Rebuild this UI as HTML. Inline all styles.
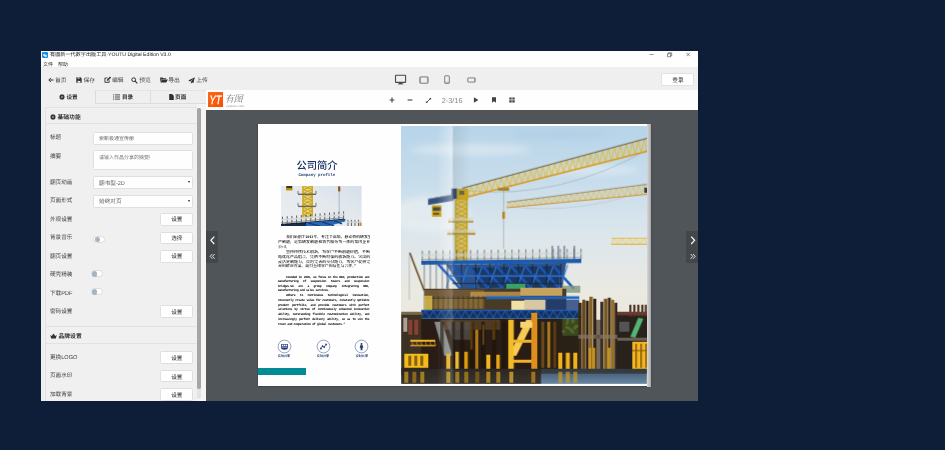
<!DOCTYPE html>
<html lang="zh-CN">
<head>
<meta charset="utf-8">
<title>有图新一代数字出版工具-YOUTU Digital Edition V3.0</title>
<style>
*{box-sizing:border-box;margin:0;padding:0}
html,body{width:945px;height:450px;overflow:hidden;background:#0e1e39}
body{text-rendering:geometricPrecision;position:relative;font-family:"Liberation Sans","Noto Sans CJK SC",sans-serif;color:#333}
.abs{position:absolute}
#win{filter:blur(0.3px);opacity:0.999;will-change:transform;position:absolute;left:41px;top:51px;width:657px;height:350px;background:#f0f0f0;overflow:hidden}
/* coordinates inside #win are page coords minus (41,51) */
#titlebar{position:absolute;left:0;top:0;width:657px;height:16px;background:#fff}
.t{position:absolute;white-space:nowrap;line-height:1}
#toolbar{position:absolute;left:0;top:16px;width:657px;height:23px;background:#f0f0f0}
.tb{position:absolute;top:27px;font-size:5.8px;color:#4a4a4a;white-space:nowrap;line-height:7px;height:7px}
#tabs{position:absolute;left:0;top:39px;width:165px;height:14px;z-index:2}
.tab{position:absolute;top:0;height:14px;font-size:5.6px;font-weight:bold;line-height:17.4px;text-align:center;color:#333;border-bottom:1px solid #ddd}
#side{position:absolute;left:0;top:0;width:165px;height:350px}
.car{position:absolute;right:2.6px;top:4.3px;width:0;height:0;border-left:1.7px solid transparent;border-right:1.7px solid transparent;border-top:2.4px solid #222}
.panel{position:absolute;left:4px;width:153px;border:1px solid #e2e2e2;background:#f1f1f1}
.ph{position:absolute;left:0;width:151px;height:16px;border-bottom:1px solid #e2e2e2;font-size:6px;font-weight:bold;color:#333;line-height:16px;padding-left:6px}
.lb{margin-top:1.5px;position:absolute;left:9px;font-size:5.6px;color:#444;line-height:7px;white-space:nowrap}
.inp{position:absolute;left:52.1px;width:100.3px;background:#fff;border:1px solid #e0e0e0;overflow:hidden;border-radius:1.5px;font-size:5px;color:#666;padding-left:5px;white-space:nowrap}
.btn{position:absolute;left:119.2px;width:33.2px;height:12.5px;overflow:hidden;background:#fff;border:1px solid #e0e0e0;border-radius:1.5px;font-size:5.6px;color:#333;text-align:center;line-height:11.5px}
.tog{position:absolute;width:11.8px;height:6.9px;border-radius:3.5px;background:#fff;border:0.5px solid #d8dde2}
.tog:before{content:"";position:absolute;left:0.5px;top:0.4px;width:5.2px;height:5.2px;border-radius:50%;background:#a9b4c0}
.cn{position:absolute;white-space:nowrap;font-family:"Liberation Serif","Noto Serif CJK SC",serif;font-weight:600;font-size:15.6px;line-height:18.4px;height:18.4px;color:#000;transform:scale(0.25);transform-origin:0 0;overflow:hidden}
.en{position:absolute;white-space:nowrap;font-family:"Liberation Mono",monospace;font-size:12.4px;font-weight:bold;letter-spacing:-1.2px;line-height:17.6px;height:17.6px;color:#000;transform:scale(0.25);transform-origin:0 0;overflow:hidden}
#viewer{position:absolute;left:164.6px;top:39.4px;width:493px;height:311px;background:#51565a}
#vbar{position:absolute;left:0;top:0;width:493px;height:19.2px;background:#fff}
</style>
</head>
<body>
<div id="win">
  <div id="titlebar">
    <svg class="abs" style="left:0.5px;top:0.5px" width="6" height="6" viewBox="0 0 6 6"><rect x="0" y="0" width="6" height="6" rx="1" fill="#1e8fe0"/><path d="M1.2 2.2h2.2v1.6H1.2z M2.6 3.2h2.2v1.6H2.6z" fill="#fff"/></svg>
    <div class="t" style="left:9px;top:2.2px;font-size:5.13px;color:#222">有图新一代数字出版工具-YOUTU Digital Edition V3.0</div>
    <div class="t" style="left:2px;top:11.5px;font-size:5px;color:#333">文件</div>
    <div class="t" style="left:17px;top:11.5px;font-size:5px;color:#333">帮助</div>
    <svg class="abs" style="left:606px;top:-0.5px" width="46" height="8" viewBox="0 0 46 8"><path d="M2.5 3.5h4" stroke="#555" stroke-width="0.6" fill="none"/><path d="M20.5 2.7h3.2v3h-3.2z M21.5 2.7v-0.9h3.2v3h-1" stroke="#444" stroke-width="0.6" fill="none"/><path d="M39.5 1.8l3.4 3.4M42.9 1.8l-3.4 3.4" stroke="#444" stroke-width="0.6" fill="none"/></svg>
  </div>
  <div id="toolbar"></div>
  <!-- toolbar items (coords relative to #win) -->
  <svg class="abs" style="left:7px;top:26px" width="6" height="6" viewBox="0 0 6 6"><path d="M5.6 3H1.2M2.9 0.9L0.8 3l2.1 2.1" stroke="#333" stroke-width="1" fill="none"/></svg>
  <div class="tb" style="left:14px">首页</div>
  <svg class="abs" style="left:35px;top:26px" width="6" height="6" viewBox="0 0 6 6"><path d="M0.3 0.3h4.3l1.1 1.1v4.3H0.3z" fill="#333"/><rect x="1.5" y="0.3" width="2.3" height="1.3" fill="#f0f0f0"/><rect x="2.8" y="0.4" width="0.7" height="1" fill="#333"/><rect x="1.6" y="3.9" width="2.8" height="1.8" fill="#f0f0f0"/></svg>
  <div class="tb" style="left:42.5px">保存</div>
  <svg class="abs" style="left:62.5px;top:25px" width="7.5" height="7.5" viewBox="0 0 7.5 7.5"><path d="M5.2 4.4v1.9H0.9V2h2.6" stroke="#333" stroke-width="0.9" fill="none"/><path d="M2.8 5l0.3-1.5L6 0.6l1.1 1.1L4.2 4.6z" fill="#333"/></svg>
  <div class="tb" style="left:71px">编辑</div>
  <svg class="abs" style="left:90.4px;top:25.5px" width="7" height="7" viewBox="0 0 7 7"><circle cx="2.7" cy="2.7" r="1.9" stroke="#333" stroke-width="1" fill="none"/><path d="M4.1 4.1L6.3 6.3" stroke="#333" stroke-width="1.1"/></svg>
  <div class="tb" style="left:98.2px">预览</div>
  <svg class="abs" style="left:118.5px;top:26px" width="8" height="6" viewBox="0 0 8 6"><path d="M0.2 0.6h2.4l0.6 0.7h2.9v0.9H1.6L0.2 5z" fill="#333"/><path d="M1.9 2.6h5.9L6.3 5.6H0.4z" fill="#333"/></svg>
  <div class="tb" style="left:127.3px">导出</div>
  <svg class="abs" style="left:147.2px;top:25.5px" width="7" height="7" viewBox="0 0 7 7"><path d="M6.8 0.2L0.2 3.6l1.9 0.8L5.6 1.4L2.9 4.8v1.9l1-1.3l1.5 0.7z" fill="#333"/></svg>
  <div class="tb" style="left:155.2px">上传</div>
  <!-- device icons -->
  <svg class="abs" style="left:353px;top:23px" width="13" height="11" viewBox="0 0 13 11"><rect x="1.5" y="1.2" width="10.1" height="7.2" rx="0.5" stroke="#4a4a4a" stroke-width="1.1" fill="none"/><path d="M5.2 8.6h2.8l0.5 1.3H4.7z" fill="#4a4a4a"/><rect x="3.9" y="9.7" width="5.4" height="0.7" fill="#4a4a4a"/></svg>
  <svg class="abs" style="left:377.6px;top:24.6px" width="10" height="8" viewBox="0 0 10 8"><rect x="0.8" y="0.9" width="8.3" height="6.3" rx="0.7" stroke="#555" stroke-width="0.75" fill="none"/><path d="M1.5 1v6M8.4 1v6" stroke="#5a5a5a" stroke-width="0.35"/></svg>
  <svg class="abs" style="left:403.4px;top:24.2px" width="6" height="9" viewBox="0 0 6 9"><rect x="0.7" y="0.8" width="4.6" height="7.6" rx="0.6" stroke="#555" stroke-width="0.7" fill="none"/><path d="M0.8 7.3h4.4" stroke="#5a5a5a" stroke-width="0.4"/></svg>
  <svg class="abs" style="left:425.6px;top:25.7px" width="9" height="6" viewBox="0 0 9 6"><rect x="0.8" y="0.9" width="7.4" height="4.2" rx="0.5" stroke="#555" stroke-width="0.7" fill="none"/><path d="M7.5 1v4" stroke="#5a5a5a" stroke-width="0.35"/></svg>
  <div class="abs" style="left:620.4px;top:22.2px;width:33px;height:13px;background:#fff;border:1px solid #e2e2e2;border-radius:2px;font-size:5.6px;line-height:14.6px;text-align:center;color:#222">登录</div>
  <div id="tabs">
    <div class="tab" style="left:0;width:54.5px;border-bottom:none"><svg width="6" height="6" viewBox="-3 -3 6 6" style="vertical-align:-0.7px;margin-right:1.5px"><circle r="2.1" fill="#333"/><g stroke="#333" stroke-width="1.05"><path d="M0 -2.9V2.9M-2.9 0H2.9M-2.05 -2.05L2.05 2.05M-2.05 2.05L2.05 -2.05"/></g><circle r="0.75" fill="#f0f0f0"/></svg>设置</div>
    <div class="tab" style="left:54px;width:55.5px;border-left:1px solid #ddd;border-top:1px solid #e6e6e6;line-height:15.4px;border-bottom-left-radius:1.5px"><svg width="7" height="6" viewBox="0 0 7 6" style="vertical-align:-0.7px;margin-right:1.5px"><path d="M0 0.9h1.2M0 3h1.2M0 5.1h1.2M2 0.9h5M2 3h5M2 5.1h5" stroke="#333" stroke-width="0.85"/></svg>目录</div>
    <div class="tab" style="left:109px;width:56px;padding-right:1.6px;border-left:1px solid #ddd;border-top:1px solid #e6e6e6;line-height:15.4px;border-bottom-left-radius:1.5px"><svg width="5" height="6" viewBox="0 0 5 6" style="vertical-align:-0.7px;margin-right:1px"><path d="M0.2 0h2.8l1.8 1.8v4.2H0.2z" fill="#333"/></svg>页面</div>
  </div>
  <div id="side">
  <div class="abs" style="left:4px;top:56px;width:152.5px;height:300px;border:1px solid #e3e3e3;border-bottom:none;background:#f1f1f1"></div>
  <div class="abs" style="left:5px;top:72px;width:151px;height:1px;background:#e3e3e3"></div>
  <div class="abs" style="left:5px;top:275px;width:151px;height:1px;background:#e3e3e3"></div>
  <div class="abs" style="left:5px;top:292px;width:151px;height:1px;background:#e3e3e3"></div>
  <div class="lb" style="left:9px;top:61.1px;font-weight:bold;font-size:5.8px;color:#333"><svg width="6" height="6" viewBox="-3 -3 6 6" style="vertical-align:-0.7px;margin-right:1.5px"><circle r="2.1" fill="#333"/><g stroke="#333" stroke-width="1.05"><path d="M0 -2.9V2.9M-2.9 0H2.9M-2.05 -2.05L2.05 2.05M-2.05 2.05L2.05 -2.05"/></g><circle r="0.75" fill="#f0f0f0"/></svg>基础功能</div>
  <div class="lb" style="left:9px;top:280.1px;font-weight:bold;font-size:5.8px;color:#333"><svg width="7" height="6" viewBox="0 0 7 6" style="vertical-align:-0.7px;margin-right:1.5px"><path d="M0.2 2.1l1.6 1l1.7-2.6l1.7 2.6l1.6-1l-0.9 3H1.1z M1 5.4h5v0.6H1z" fill="#333"/></svg>品牌设置</div>
  <div class="lb" style="top:82.8px">标题</div>
  <div class="lb" style="top:101.0px">摘要</div>
  <div class="lb" style="top:127.3px">翻页动画</div>
  <div class="lb" style="top:145.8px">页面形式</div>
  <div class="lb" style="top:164.4px">外观设置</div>
  <div class="lb" style="top:182.8px">背景音乐</div>
  <div class="lb" style="top:201.3px">翻页设置</div>
  <div class="lb" style="top:219.5px">硬壳精装</div>
  <div class="lb" style="top:238.0px">下载PDF</div>
  <div class="lb" style="top:256.5px">密码设置</div>
  <div class="lb" style="top:302.5px">更换LOGO</div>
  <div class="lb" style="top:320.8px">页面水印</div>
  <div class="lb" style="top:339.4px">加载背景</div>
  <div class="inp" style="top:80.5px;height:13.0px;line-height:13.4px">索新极通宣传册</div>
  <div class="inp" style="top:98.9px;height:20.6px;line-height:15.2px;color:#777">请输入作品分享的摘要!</div>
  <div class="inp" style="top:124.8px;height:13.6px;line-height:15.0px;font-size:5.6px;color:#666">翻书型-2D<span class="car"></span></div>
  <div class="inp" style="top:143.5px;height:13.0px;line-height:13.2px;font-size:5.6px;color:#666">始终对页<span class="car"></span></div>
  <div class="btn" style="top:162.1px;height:12.6px;line-height:13.8px">设置</div>
  <div class="btn" style="top:180.6px;height:12.7px;line-height:13.9px">选择</div>
  <div class="btn" style="top:199.2px;height:12.6px;line-height:13.8px">设置</div>
  <div class="btn" style="top:254.4px;height:13.0px;line-height:14.2px">设置</div>
  <div class="btn" style="top:300.2px;height:12.8px;line-height:14.0px">设置</div>
  <div class="btn" style="top:318.5px;height:12.8px;line-height:14.0px">设置</div>
  <div class="btn" style="top:337.1px;height:12.8px;line-height:14.0px">设置</div>
  <div class="tog" style="left:52.2px;top:184.7px"></div>
  <div class="tog" style="left:49.8px;top:219.0px"></div>
  <div class="tog" style="left:49.8px;top:237.0px"></div>
  <div class="abs" style="left:155.7px;top:52px;width:9px;height:300px;background:#f6f6f6"></div>
  <div class="abs" style="left:156.4px;top:56.6px;width:3.4px;height:291.1px;background:#e4e4e4;border-radius:1.7px"></div>
  <div class="abs" style="left:156.4px;top:56.6px;width:3.4px;height:281.8px;background:#a6a6a6;border-radius:1.7px"></div>
  </div>
  <div id="viewer"><div id="vbar"></div></div>
  <div class="abs" style="left:167px;top:40.8px;width:15.2px;height:15.5px;background:linear-gradient(135deg,#ff6a14,#f94f06)"></div>
  <svg class="abs" style="left:167px;top:40.8px" width="15.2" height="15.5" viewBox="0 0 15.2 15.5"><text x="1.6" y="12.2" font-family="Liberation Sans,sans-serif" font-size="12" font-style="italic" fill="#fff" stroke="#fff" stroke-width="0.35" textLength="11.6" lengthAdjust="spacingAndGlyphs">YT</text></svg>
  <div class="t" style="left:183.8px;top:44.3px;font-family:'Liberation Serif','Noto Serif CJK SC',serif;font-style:italic;font-size:9.2px;color:#777;letter-spacing:-0.4px">有图</div>
  <div class="t" style="left:185px;top:53.8px;font-size:2.9px;color:#8c8c8c;letter-spacing:0.22px">yoututu.com</div>
  <svg class="abs" style="left:348.1px;top:46.4px" width="6" height="6" viewBox="0 0 6 6"><path d="M3 0.6v4.8M0.6 3h4.8" stroke="#444" stroke-width="1.1"/></svg>
  <svg class="abs" style="left:366.4px;top:46.4px" width="6" height="6" viewBox="0 0 6 6"><path d="M0.6 3h4.8" stroke="#444" stroke-width="1.1"/></svg>
  <svg class="abs" style="left:383.7px;top:45.9px" width="7" height="7" viewBox="0 0 7 7"><path d="M1.6 5.4L5.4 1.6" stroke="#444" stroke-width="0.9"/><path d="M4 0.9h2.1v2.1z M0.9 4v2.1h2.1z" fill="#444"/></svg>
  <div class="t" style="left:400.8px;top:45.8px;font-size:7.3px;color:#8a8a8a">2-3/16</div>
  <svg class="abs" style="left:431.5px;top:46.4px" width="6" height="6" viewBox="0 0 6 6"><path d="M0.9 0.3L5.4 3L0.9 5.7z" fill="#444"/></svg>
  <svg class="abs" style="left:449.8px;top:46.4px" width="6" height="6" viewBox="0 0 6 6"><path d="M1 0.3h4v5.4L3 4.2L1 5.7z" fill="#444"/></svg>
  <svg class="abs" style="left:467.6px;top:46.4px" width="6" height="6" viewBox="0 0 6 6"><path d="M0.3 0.5h2.4v2.1H0.3zM3.3 0.5h2.4v2.1H3.3zM0.3 3.3h2.4v2.1H0.3zM3.3 3.3h2.4v2.1H3.3z" fill="#444"/></svg>
  <div class="abs" style="left:165.1px;top:180.4px;width:11.7px;height:31.7px;background:#44484b"></div>
  <div class="abs" style="left:645.1px;top:180.4px;width:12px;height:31.7px;background:#44484b"></div>
  <svg class="abs" style="left:165.1px;top:180.4px" width="11.7" height="31.7" viewBox="0 0 11.7 31.7"><path d="M8.3 5.6L4.9 9.3L8.3 13" stroke="#fff" stroke-width="1.2" fill="none"/><path d="M6.3 23L4.1 25.4L6.3 27.8M8.7 23L6.5 25.4L8.7 27.8" stroke="#eee" stroke-width="0.9" fill="none"/></svg>
  <svg class="abs" style="left:645.1px;top:180.4px" width="11.9" height="31.7" viewBox="0 0 11.9 31.7"><path d="M5.2 5.6L8.6 9.3L5.2 13" stroke="#fff" stroke-width="1.2" fill="none"/><path d="M4.6 23L6.8 25.4L4.6 27.8M7 23L9.2 25.4L7 27.8" stroke="#eee" stroke-width="0.9" fill="none"/></svg>
  <div class="abs" style="left:216.8px;top:72.7px;width:392.9px;height:262.8px;background:#fff;box-shadow:0 0.5px 1.5px rgba(0,0,0,0.45)"></div>
  <div class="abs" style="left:605.7px;top:72.7px;width:4px;height:262.9px;background:linear-gradient(90deg,#d8d8d8,#bdbdbd 60%,#a9a9a9)"></div>
  <div class="t" style="left:255.4px;top:111.4px;font-size:10.3px;font-weight:500;color:#1f3566">公司简介</div>
  <div class="t" style="left:257.4px;top:123.4px;font-family:'Liberation Mono',monospace;font-size:4.1px;font-weight:bold;color:#2a4478">Company profile</div>
  <svg class="abs" style="left:240.0px;top:134.6px" width="80.6" height="40.2" viewBox="281.0 185.6 80.6 40.2">
<defs><linearGradient id="sky2" x1="0" y1="1" x2="1" y2="0"><stop offset="0" stop-color="#eef0f0"/><stop offset="0.6" stop-color="#e4e9ee"/><stop offset="1" stop-color="#d6e0ec"/></linearGradient><filter id="bl3"><feGaussianBlur stdDeviation="0.3"/></filter></defs>
<rect x="281.0" y="185.6" width="80.6" height="40.2" fill="url(#sky2)"/>
<g filter="url(#bl3)">
<rect x="286" y="185.6" width="6.5" height="4.4" fill="#b88f10"/><rect x="286.5" y="185.6" width="5.5" height="2" fill="#3a3420"/>
<rect x="302.5" y="185.6" width="10" height="32" fill="#e2c648" opacity="0.65"/>
<path d="M303 185.6V217.5M312.2 185.6V217.5" stroke="#cfa410" stroke-width="1.4"/>
<path d="M312 185.6 L303.5 189.2 L312 192.8 L303.5 196.4 L312 200.0 L303.5 203.6 L312 207.2 L303.5 210.8 L312 214.4 L303.5 218.0" stroke="#c9a010" stroke-width="1" fill="none"/>
<path d="M303.5 185.6 L312 189.2 L303.5 192.8 L312 196.4 L303.5 200.0 L312 203.6 L303.5 207.2 L312 210.8 L303.5 214.4 L312 218.0" stroke="#c9a010" stroke-width="0.8" fill="none"/>
<rect x="298" y="193.2" width="18" height="1.4" fill="#6a6a5a"/><rect x="298" y="205.3" width="18" height="1.4" fill="#6a6a5a"/>
<rect x="297.5" y="190.5" width="1" height="3" fill="#777"/><rect x="315.5" y="190.5" width="1" height="3" fill="#777"/><rect x="297.5" y="202.5" width="1" height="3" fill="#777"/><rect x="315.5" y="202.5" width="1" height="3" fill="#777"/>
<path d="M339.2 186V212.5" stroke="#888" stroke-width="0.5"/><rect x="338.1" y="186" width="2.2" height="5" fill="#8a5a1c"/>
<path d="M282.5 216.3V223.9" stroke="#2f3a4a" stroke-width="0.8"/>
<path d="M287.2 215.9V223.5" stroke="#2f3a4a" stroke-width="0.8"/>
<path d="M291.9 215.5V223.1" stroke="#2f3a4a" stroke-width="0.8"/>
<path d="M296.6 215.1V222.7" stroke="#2f3a4a" stroke-width="0.8"/>
<path d="M301.3 214.7V222.3" stroke="#2f3a4a" stroke-width="0.8"/>
<path d="M306.0 214.2V221.8" stroke="#2f3a4a" stroke-width="0.8"/>
<path d="M310.7 213.8V221.4" stroke="#2f3a4a" stroke-width="0.8"/>
<path d="M315.4 213.4V221.0" stroke="#2f3a4a" stroke-width="0.8"/>
<path d="M320.1 213.0V220.6" stroke="#2f3a4a" stroke-width="0.8"/>
<path d="M324.8 212.6V220.2" stroke="#2f3a4a" stroke-width="0.8"/>
<path d="M329.5 212.2V219.8" stroke="#2f3a4a" stroke-width="0.8"/>
<path d="M334.2 211.8V219.4" stroke="#2f3a4a" stroke-width="0.8"/>
<path d="M338.9 211.4V219.0" stroke="#2f3a4a" stroke-width="0.8"/>
<path d="M343.6 211.0V218.6" stroke="#2f3a4a" stroke-width="0.8"/>
<path d="M281 218.6L344 213.2L344 215L281 220.6Z" fill="#d9dcda" opacity="0.9"/>
<path d="M281 222.6L344 217.2" stroke="#8a8a82" stroke-width="0.9"/>
<path d="M281 223.6L344 218.3L346 219.5L344 220.3L281 225.6Z" fill="#18243c"/>
<path d="M281 225L306 223V225.8H281Z" fill="#1c2c4c"/>
<path d="M306 222.4L345 219.2L345 221L328 225.8H306Z" fill="#2a68b8"/>
<path d="M308 222.5L320 225.8M322 221.5L334 225.5M334 220.4L342 223.5" stroke="#163e80" stroke-width="1.2"/>
<path d="M348 219.5V225.8" stroke="#3a4656" stroke-width="0.8"/>
<path d="M351.5 219.5V225.8" stroke="#3a4656" stroke-width="0.8"/>
<path d="M355 219.5V225.8" stroke="#3a4656" stroke-width="0.8"/>
<path d="M358.5 219.5V225.8" stroke="#3a4656" stroke-width="0.8"/>
<rect x="347" y="221" width="14.6" height="1.6" fill="#cfd3d0" opacity="0.9"/><rect x="359.5" y="222.5" width="2.1" height="3" fill="#d08a2a"/>
</g></svg>
  <div class="cn" style="left:245.2px;top:183.7px;width:336.0px;text-align-last:justify">我们始创于2013年，专注于高塔、悬索桥的研发生</div>
  <div class="cn" style="left:237.0px;top:188.7px;width:368.8px;text-align-last:justify">产制造，是集研发制造和销售服务为一体的集团企业</div>
  <div class="cn" style="left:237.0px;top:193.5px;width:368.8px;">公司。</div>
  <div class="cn" style="left:245.2px;top:199.0px;width:336.0px;text-align-last:justify">坚持持续技术创新，为客户不断创造价值，不断</div>
  <div class="cn" style="left:237.0px;top:203.6px;width:368.8px;text-align-last:justify">地优化产品组合，凭借不断增强的创新能力、突出的</div>
  <div class="cn" style="left:237.0px;top:208.5px;width:368.8px;text-align-last:justify">灵活定制能力、日趋完善的交付能力，为客户提供完</div>
  <div class="cn" style="left:237.0px;top:213.4px;width:368.8px;">善的解决方案，赢得全球客户的信任与合作。”</div>
  <div class="en" style="left:245.0px;top:223.5px;width:333.6px;text-align-last:justify">Founded in 2005, we focus on the R&amp;D, production and</div>
  <div class="en" style="left:237.0px;top:228.1px;width:365.6px;text-align-last:justify">manufacturing of suspension towers and suspension</div>
  <div class="en" style="left:237.0px;top:232.7px;width:365.6px;text-align-last:justify">bridges.We are a group company integrating R&amp;D,</div>
  <div class="en" style="left:237.0px;top:237.2px;width:365.6px;">manufacturing and sales services.</div>
  <div class="en" style="left:245.0px;top:241.8px;width:333.6px;text-align-last:justify">Adhere to continuous technological innovation,</div>
  <div class="en" style="left:237.0px;top:246.5px;width:365.6px;text-align-last:justify">constantly create value for customers, constantly optimize</div>
  <div class="en" style="left:237.0px;top:251.5px;width:365.6px;text-align-last:justify">product portfolio, and provide customers with perfect</div>
  <div class="en" style="left:237.0px;top:256.4px;width:365.6px;text-align-last:justify">solutions by virtue of continuously enhanced innovation</div>
  <div class="en" style="left:237.0px;top:261.2px;width:365.6px;text-align-last:justify">ability, outstanding flexible customization ability, and</div>
  <div class="en" style="left:237.0px;top:266.1px;width:365.6px;text-align-last:justify">increasingly perfect delivery ability, so as to win the</div>
  <div class="en" style="left:237.0px;top:271.0px;width:365.6px;">trust and cooperation of global customers.”</div>
  <svg class="abs" style="left:235.5px;top:287.8px" width="15" height="15" viewBox="-7.5 -7.5 15 15"><circle cx="0" cy="0" r="6.4" fill="#fff" stroke="#3a4c86" stroke-width="0.5"/><path d="M-3.4 -2.6h6.8v3.6a3.4 2.2 0 0 1 -6.8 0z" fill="#23397a"/><rect x="-2.6" y="-1.9" width="1.4" height="1.4" fill="#fff"/><rect x="-0.7" y="-1.9" width="1.4" height="1.4" fill="#fff"/><rect x="1.2" y="-1.9" width="1.4" height="1.4" fill="#fff"/><path d="M-2.8 0.6h5.6" stroke="#fff" stroke-width="0.7"/></svg>
  <div class="t" style="left:236.8px;top:304.2px;font-size:3.1px;color:#2a3f7a;font-weight:bold">实时共享</div>
  <svg class="abs" style="left:274.5px;top:287.8px" width="15" height="15" viewBox="-7.5 -7.5 15 15"><circle cx="0" cy="0" r="6.4" fill="#fff" stroke="#3a4c86" stroke-width="0.5"/><path d="M-2.6 2L-0.9 -0.3L0.8 0.6L2.6 -2" stroke="#23397a" stroke-width="0.6" fill="none"/><circle cx="-2.6" cy="2" r="0.9" fill="#23397a"/><circle cx="-0.9" cy="-0.3" r="0.9" fill="#23397a"/><circle cx="0.8" cy="0.6" r="0.9" fill="#23397a"/><circle cx="2.6" cy="-2" r="0.9" fill="#23397a"/></svg>
  <div class="t" style="left:275.8px;top:304.2px;font-size:3.1px;color:#2a3f7a;font-weight:bold">实时共享</div>
  <svg class="abs" style="left:313.4px;top:287.8px" width="15" height="15" viewBox="-7.5 -7.5 15 15"><circle cx="0" cy="0" r="6.4" fill="#fff" stroke="#3a4c86" stroke-width="0.5"/><circle cx="0" cy="-2.6" r="1" fill="#23397a"/><path d="M-1.3 -1.3h2.6l0.5 2.6h-0.9v2.5h-1.8v-2.5h-0.9z" fill="#23397a"/></svg>
  <div class="t" style="left:314.7px;top:304.2px;font-size:3.1px;color:#2a3f7a;font-weight:bold">实时共享</div>
  <div class="abs" style="left:216.8px;top:317.1px;width:48.1px;height:7.2px;background:#008c96"></div>
  <svg class="abs" style="left:359.7px;top:75.3px" width="246.0" height="258.0" viewBox="400.7 126.3 246.0 258.0">
<defs>
<linearGradient id="sky" x1="0" y1="0" x2="0" y2="1"><stop offset="0" stop-color="#b8d5ea"/><stop offset="0.22" stop-color="#c9deec"/><stop offset="0.42" stop-color="#dde7ed"/><stop offset="0.64" stop-color="#ebeae3"/><stop offset="1" stop-color="#efe6d4"/></linearGradient>
<linearGradient id="wat" x1="0" y1="0" x2="0" y2="1"><stop offset="0" stop-color="#3c546e"/><stop offset="1" stop-color="#6c88a4"/></linearGradient>
<linearGradient id="fold" x1="0" y1="0" x2="1" y2="0"><stop offset="0" stop-color="#fff" stop-opacity="0"/><stop offset="0.48" stop-color="#fff" stop-opacity="0.4"/><stop offset="0.5" stop-color="#5a6a78" stop-opacity="0.14"/><stop offset="1" stop-color="#5a6a78" stop-opacity="0"/></linearGradient>
<filter id="bl" x="-5%" y="-5%" width="110%" height="110%"><feGaussianBlur stdDeviation="0.35"/></filter>
<filter id="bl2" x="-5%" y="-5%" width="110%" height="110%"><feGaussianBlur stdDeviation="3"/></filter>
</defs>
<rect x="400.7" y="126.3" width="246.0" height="258.0" fill="url(#sky)"/>
<g filter="url(#bl2)" opacity="0.55">
<ellipse cx="470" cy="150" rx="60" ry="6" fill="#e6f0f6"/>
<ellipse cx="590" cy="170" rx="50" ry="5" fill="#e8f1f6"/>
<ellipse cx="430" cy="215" rx="40" ry="18" fill="#f1f4f5"/>
<ellipse cx="560" cy="135" rx="50" ry="4" fill="#aacde6"/>
</g>
<g filter="url(#bl)">
<path d="M466 191Q560 200 647 150" stroke="#6a7480" stroke-width="0.4" fill="none" opacity="0.7"/>
<path d="M510 207Q580 215 647 190" stroke="#6a7480" stroke-width="0.3" fill="none" opacity="0.5"/>
<path d="M462 188.5L647 138.5L647 151.5L462 198.5Z" fill="#dfb432" opacity="0.22"/>
<path d="M462.0 198.5L465.0 187.7L468.0 197.0L471.0 186.1L473.9 195.5L476.9 184.5L479.9 194.0L482.9 182.9L485.9 192.4L488.9 181.2L491.8 190.9L494.8 179.6L497.8 189.4L500.8 178.0L503.8 187.9L506.8 176.4L509.7 186.4L512.7 174.8L515.7 184.9L518.7 173.2L521.7 183.3L524.7 171.6L527.6 181.8L530.6 170.0L533.6 180.3L536.6 168.3L539.6 178.8L542.6 166.7L545.5 177.3L548.5 165.1L551.5 175.8L554.5 163.5L557.5 174.2L560.5 161.9L563.5 172.7L566.4 160.3L569.4 171.2L572.4 158.7L575.4 169.7L578.4 157.0L581.4 168.2L584.3 155.4L587.3 166.7L590.3 153.8L593.3 165.1L596.3 152.2L599.3 163.6L602.2 150.6L605.2 162.1L608.2 149.0L611.2 160.6L614.2 147.4L617.2 159.1L620.1 145.8L623.1 157.6L626.1 144.1L629.1 156.0L632.1 142.5L635.1 154.5L638.0 140.9L641.0 153.0L644.0 139.3L647.0 151.5" stroke="#dfb432" stroke-width="0.75" fill="none"/>
<path d="M462.0 188.5L647.0 138.5" stroke="#6f634e" stroke-width="1.1" fill="none" opacity="1"/>
<path d="M462.0 198.5L647.0 151.5" stroke="#d9981c" stroke-width="1.5" fill="none" opacity="1"/>
<rect x="497.8" y="188.0" width="11.0" height="3.0" fill="#a8882a" opacity="1"/>
<path d="M506.5 202.5L647 184.5L647 194.5L506.5 208Z" fill="#d9b856" opacity="0.22"/>
<path d="M506.5 208.0L509.3 202.1L512.1 207.5L514.9 201.4L517.7 206.9L520.5 200.7L523.4 206.4L526.2 200.0L529.0 205.8L531.8 199.3L534.6 205.3L537.4 198.5L540.2 204.8L543.0 197.8L545.8 204.2L548.6 197.1L551.5 203.7L554.3 196.4L557.1 203.1L559.9 195.7L562.7 202.6L565.5 194.9L568.3 202.1L571.1 194.2L573.9 201.5L576.8 193.5L579.6 201.0L582.4 192.8L585.2 200.4L588.0 192.1L590.8 199.9L593.6 191.3L596.4 199.4L599.2 190.6L602.0 198.8L604.9 189.9L607.7 198.3L610.5 189.2L613.3 197.7L616.1 188.5L618.9 197.2L621.7 187.7L624.5 196.7L627.3 187.0L630.1 196.1L633.0 186.3L635.8 195.6L638.6 185.6L641.4 195.0L644.2 184.9L647.0 194.5" stroke="#d9b856" stroke-width="0.6" fill="none"/>
<path d="M506.5 202.5L647.0 184.5" stroke="#94845e" stroke-width="0.9" fill="none" opacity="1"/>
<path d="M506.5 208.0L647.0 194.5" stroke="#d0902a" stroke-width="1.1" fill="none" opacity="1"/>
<rect x="644.0" y="188.0" width="3.0" height="5.0" fill="#3a3a40" opacity="1"/>
<path d="M611 238.5L647 238.5L647 244.5L611 244.5Z" fill="#ecd06a" opacity="0.22"/>
<path d="M611.0 244.5L614.6 238.5L618.2 244.5L621.8 238.5L625.4 244.5L629.0 238.5L632.6 244.5L636.2 238.5L639.8 244.5L643.4 238.5L647.0 244.5" stroke="#ecd06a" stroke-width="0.7" fill="none"/>
<path d="M611.0 238.5L647.0 238.5" stroke="#e0b93a" stroke-width="0.8" fill="none" opacity="1"/>
<path d="M611.0 244.5L647.0 244.5" stroke="#e0b030" stroke-width="1.0" fill="none" opacity="1"/>
<path d="M427.8 199L453 194.5L453 201L427.8 205.3Z" fill="#35517c"/>
<path d="M428.0 199.3L453.0 194.8" stroke="#8fa0b4" stroke-width="0.7" fill="none" opacity="1"/>
<rect x="431.7" y="205.5" width="9.5" height="11.5" fill="#c9a21c" opacity="1"/>
<rect x="432.5" y="207.5" width="8.0" height="3.5" fill="#4a4a3a" opacity="1"/>
<rect x="433.0" y="213.0" width="6.0" height="2.0" fill="#6a5a20" opacity="1"/>
<rect x="451.0" y="188.8" width="6.0" height="10.5" fill="#2f466a" opacity="1"/>
<rect x="456.5" y="189.0" width="11.5" height="11.0" fill="#cda71c" opacity="1"/>
<rect x="459.0" y="191.0" width="5.0" height="4.0" fill="#6a6a50" opacity="1"/>
<rect x="455.0" y="200.0" width="12.0" height="62.0" fill="#d8b838" opacity="0.7"/>
<path d="M455.4 200.0L455.4 262.0" stroke="#c9a010" stroke-width="1.5" fill="none" opacity="1"/>
<path d="M466.6 200.0L466.6 262.0" stroke="#c9a010" stroke-width="1.5" fill="none" opacity="1"/>
<path d="M466 200.0L456 204.6L466 209.2L456 213.8L466 218.4L456 223.0L466 227.6L456 232.2L466 236.8L456 241.4L466 246.0L456 250.6L466 255.2L456 259.8" stroke="#c9a010" stroke-width="1" fill="none"/>
<path d="M456 200.0L466 204.6L456 209.2L466 213.8L456 218.4L466 223.0L456 227.6L466 232.2L456 236.8L466 241.4L456 246.0L466 250.6L456 255.2L466 259.8" stroke="#c9a010" stroke-width="0.8" fill="none"/>
<rect x="448.0" y="221.0" width="25.0" height="2.0" fill="#b9a24a" opacity="1"/>
<rect x="447.0" y="233.0" width="28.0" height="2.2" fill="#b39a40" opacity="1"/>
<rect x="448.0" y="218.0" width="25.0" height="3.0" fill="#d9d5c0" opacity="0.6"/>
<rect x="447.0" y="230.0" width="28.0" height="3.0" fill="#d9d5c0" opacity="0.6"/>
<path d="M503.3 190.0L503.3 249.0" stroke="#8a8a80" stroke-width="0.5" fill="none" opacity="1"/>
<rect x="502.0" y="212.0" width="2.6" height="7.0" fill="#b8881c" opacity="1"/>
<path d="M409.5 253.0L424.0 291.0" stroke="#6a5220" stroke-width="1.6" fill="none" opacity="1"/>
<path d="M409.0 253.0L409.0 300.0" stroke="#777" stroke-width="0.4" fill="none" opacity="1"/>
<path d="M422.0 251.0L422.0 261.0" stroke="#3c4a5a" stroke-width="0.7" fill="none" opacity="1"/>
<path d="M428.9 250.9L428.9 260.9" stroke="#3c4a5a" stroke-width="0.7" fill="none" opacity="1"/>
<path d="M435.8 250.8L435.8 260.8" stroke="#3c4a5a" stroke-width="0.7" fill="none" opacity="1"/>
<path d="M442.7 250.7L442.7 260.7" stroke="#3c4a5a" stroke-width="0.7" fill="none" opacity="1"/>
<path d="M449.6 250.6L449.6 260.6" stroke="#3c4a5a" stroke-width="0.7" fill="none" opacity="1"/>
<path d="M456.5 250.6L456.5 260.6" stroke="#3c4a5a" stroke-width="0.7" fill="none" opacity="1"/>
<path d="M463.4 250.5L463.4 260.5" stroke="#3c4a5a" stroke-width="0.7" fill="none" opacity="1"/>
<path d="M470.3 250.4L470.3 260.4" stroke="#3c4a5a" stroke-width="0.7" fill="none" opacity="1"/>
<path d="M477.2 250.3L477.2 260.3" stroke="#3c4a5a" stroke-width="0.7" fill="none" opacity="1"/>
<path d="M484.1 250.2L484.1 260.2" stroke="#3c4a5a" stroke-width="0.7" fill="none" opacity="1"/>
<path d="M491.0 250.1L491.0 260.1" stroke="#3c4a5a" stroke-width="0.7" fill="none" opacity="1"/>
<path d="M497.9 250.0L497.9 260.0" stroke="#3c4a5a" stroke-width="0.7" fill="none" opacity="1"/>
<path d="M504.8 250.0L504.8 260.0" stroke="#3c4a5a" stroke-width="0.7" fill="none" opacity="1"/>
<path d="M511.7 249.9L511.7 259.9" stroke="#3c4a5a" stroke-width="0.7" fill="none" opacity="1"/>
<path d="M518.6 249.8L518.6 259.8" stroke="#3c4a5a" stroke-width="0.7" fill="none" opacity="1"/>
<path d="M525.5 249.7L525.5 259.7" stroke="#3c4a5a" stroke-width="0.7" fill="none" opacity="1"/>
<path d="M532.4 249.6L532.4 259.6" stroke="#3c4a5a" stroke-width="0.7" fill="none" opacity="1"/>
<path d="M539.3 249.5L539.3 259.5" stroke="#3c4a5a" stroke-width="0.7" fill="none" opacity="1"/>
<path d="M546.2 249.4L546.2 259.4" stroke="#3c4a5a" stroke-width="0.7" fill="none" opacity="1"/>
<path d="M553.1 249.3L553.1 259.3" stroke="#3c4a5a" stroke-width="0.7" fill="none" opacity="1"/>
<path d="M560.0 249.3L560.0 259.3" stroke="#3c4a5a" stroke-width="0.7" fill="none" opacity="1"/>
<path d="M566.9 249.2L566.9 259.2" stroke="#3c4a5a" stroke-width="0.7" fill="none" opacity="1"/>
<path d="M573.8 249.1L573.8 259.1" stroke="#3c4a5a" stroke-width="0.7" fill="none" opacity="1"/>
<path d="M580.7 249.0L580.7 259.0" stroke="#3c4a5a" stroke-width="0.7" fill="none" opacity="1"/>
<path d="M421 254L581 252L581 255.2L421 257.2Z" fill="#d4d6d2" opacity="0.6"/>
<path d="M421 259.6L581 257.6" stroke="#8f8f86" stroke-width="0.8" opacity="0.9"/>
<path d="M552.0 246.0L552.0 259.0" stroke="#42566e" stroke-width="1.0" fill="none" opacity="1"/>
<path d="M558.0 246.0L558.0 259.0" stroke="#42566e" stroke-width="1.0" fill="none" opacity="1"/>
<path d="M564.0 246.0L564.0 259.0" stroke="#42566e" stroke-width="1.0" fill="none" opacity="1"/>
<path d="M574.0 246.0L574.0 259.0" stroke="#42566e" stroke-width="1.0" fill="none" opacity="1"/>
<path d="M421 261L581 259L581 263.2L510 264L421 265Z" fill="#1f5cae"/>
<path d="M424.0 262.0L424.0 312.0" stroke="#3a4a60" stroke-width="0.6" fill="none" opacity="1"/>
<path d="M430.0 262.0L430.0 312.0" stroke="#3a4a60" stroke-width="0.6" fill="none" opacity="1"/>
<path d="M436.0 262.0L436.0 312.0" stroke="#3a4a60" stroke-width="0.6" fill="none" opacity="1"/>
<path d="M442.0 262.0L442.0 312.0" stroke="#3a4a60" stroke-width="0.6" fill="none" opacity="1"/>
<path d="M448.0 262.0L448.0 312.0" stroke="#3a4a60" stroke-width="0.6" fill="none" opacity="1"/>
<path d="M446 265L566 263L562 289L462 290Z" fill="#193f7a" opacity="0.88"/>
<path d="M470 268L560 266L558 288L480 288Z" fill="#0f2444" opacity="0.55"/>
<path d="M438.0 264.5L460.0 289" stroke="#1a58b8" stroke-width="2.6"/>
<path d="M454.0 265L446.0 288" stroke="#3a7fd8" stroke-width="1.0"/>
<path d="M447.0 264.0L447.0 290.0" stroke="#10243f" stroke-width="0.8" fill="none" opacity="1"/>
<path d="M452.2 264.5L474.2 289" stroke="#1a58b8" stroke-width="2.6"/>
<path d="M468.2 265L460.2 288" stroke="#3a7fd8" stroke-width="1.0"/>
<path d="M461.2 264.0L461.2 290.0" stroke="#10243f" stroke-width="0.8" fill="none" opacity="1"/>
<path d="M466.4 264.5L488.4 289" stroke="#1a58b8" stroke-width="2.6"/>
<path d="M482.4 265L474.4 288" stroke="#3a7fd8" stroke-width="1.0"/>
<path d="M475.4 264.0L475.4 290.0" stroke="#10243f" stroke-width="0.8" fill="none" opacity="1"/>
<path d="M480.6 264.5L502.6 289" stroke="#1a58b8" stroke-width="2.6"/>
<path d="M496.6 265L488.6 288" stroke="#3a7fd8" stroke-width="1.0"/>
<path d="M489.6 264.0L489.6 290.0" stroke="#10243f" stroke-width="0.8" fill="none" opacity="1"/>
<path d="M494.8 264.5L516.8 289" stroke="#1a58b8" stroke-width="2.6"/>
<path d="M510.8 265L502.8 288" stroke="#3a7fd8" stroke-width="1.0"/>
<path d="M503.8 264.0L503.8 290.0" stroke="#10243f" stroke-width="0.8" fill="none" opacity="1"/>
<path d="M509.0 264.5L531.0 289" stroke="#1a58b8" stroke-width="2.6"/>
<path d="M525.0 265L517.0 288" stroke="#3a7fd8" stroke-width="1.0"/>
<path d="M518.0 264.0L518.0 290.0" stroke="#10243f" stroke-width="0.8" fill="none" opacity="1"/>
<path d="M523.2 264.5L545.2 289" stroke="#1a58b8" stroke-width="2.6"/>
<path d="M539.2 265L531.2 288" stroke="#3a7fd8" stroke-width="1.0"/>
<path d="M532.2 264.0L532.2 290.0" stroke="#10243f" stroke-width="0.8" fill="none" opacity="1"/>
<path d="M537.4 264.5L559.4 289" stroke="#1a58b8" stroke-width="2.6"/>
<path d="M553.4 265L545.4 288" stroke="#3a7fd8" stroke-width="1.0"/>
<path d="M546.4 264.0L546.4 290.0" stroke="#10243f" stroke-width="0.8" fill="none" opacity="1"/>
<path d="M551.6 264.5L573.6 289" stroke="#1a58b8" stroke-width="2.6"/>
<path d="M567.6 265L559.6 288" stroke="#3a7fd8" stroke-width="1.0"/>
<path d="M560.6 264.0L560.6 290.0" stroke="#10243f" stroke-width="0.8" fill="none" opacity="1"/>
<rect x="446.0" y="275.5" width="118.0" height="1.6" fill="#2a6cd0" opacity="1"/>
<rect x="452.0" y="283.0" width="110.0" height="1.2" fill="#13294a" opacity="0.8"/>
<rect x="506.0" y="284.0" width="19.0" height="7.0" fill="#3aa365" opacity="1"/>
<rect x="562.0" y="286.0" width="18.0" height="7.0" fill="#7d9a78" opacity="0.8"/>
<rect x="424.0" y="289.0" width="142.0" height="22.0" fill="#4a3a28" opacity="1"/>
<rect x="424.0" y="290.0" width="60.0" height="8.0" fill="#7a6038" opacity="0.8"/>
<rect x="470.0" y="292.0" width="50.0" height="5.0" fill="#c29a4e" opacity="0.8"/>
<rect x="520.0" y="288.0" width="42.0" height="8.0" fill="#c9a45e" opacity="1"/>
<rect x="486.0" y="296.5" width="93.0" height="2.8" fill="#1e66c6" opacity="1"/>
<rect x="511.0" y="301.0" width="13.0" height="11.0" fill="#f1e2a8" opacity="1"/>
<rect x="524.0" y="300.0" width="22.0" height="12.0" fill="#e8d9b0" opacity="0.9"/>
<rect x="424.0" y="299.0" width="60.0" height="10.0" fill="#b08a3a" opacity="0.6"/>
<path d="M428.0 296.0L428.0 310.0" stroke="#2a2a30" stroke-width="0.6" fill="none" opacity="1"/>
<path d="M433.0 296.0L433.0 310.0" stroke="#2a2a30" stroke-width="0.6" fill="none" opacity="1"/>
<path d="M438.0 296.0L438.0 310.0" stroke="#2a2a30" stroke-width="0.6" fill="none" opacity="1"/>
<path d="M443.0 296.0L443.0 310.0" stroke="#2a2a30" stroke-width="0.6" fill="none" opacity="1"/>
<path d="M448.0 296.0L448.0 310.0" stroke="#2a2a30" stroke-width="0.6" fill="none" opacity="1"/>
<path d="M453.0 296.0L453.0 310.0" stroke="#2a2a30" stroke-width="0.6" fill="none" opacity="1"/>
<path d="M458.0 296.0L458.0 310.0" stroke="#2a2a30" stroke-width="0.6" fill="none" opacity="1"/>
<path d="M463.0 296.0L463.0 310.0" stroke="#2a2a30" stroke-width="0.6" fill="none" opacity="1"/>
<path d="M468.0 296.0L468.0 310.0" stroke="#2a2a30" stroke-width="0.6" fill="none" opacity="1"/>
<path d="M473.0 296.0L473.0 310.0" stroke="#2a2a30" stroke-width="0.6" fill="none" opacity="1"/>
<path d="M478.0 296.0L478.0 310.0" stroke="#2a2a30" stroke-width="0.6" fill="none" opacity="1"/>
<path d="M483.0 296.0L483.0 310.0" stroke="#2a2a30" stroke-width="0.6" fill="none" opacity="1"/>
<rect x="545.0" y="300.0" width="34.0" height="12.0" fill="#1f3f7a" opacity="0.8"/>
<rect x="421.0" y="310.0" width="159.0" height="9.0" fill="#15315f" opacity="1"/>
<path d="M421.0 318L425.0 311L429.0 318L433.0 311L437.0 318L441.0 311L445.0 318L449.0 311L453.0 318L457.0 311L461.0 318L465.0 311L469.0 318L473.0 311L477.0 318L481.0 311L485.0 318L489.0 311L493.0 318L497.0 311L501.0 318L505.0 311L509.0 318L513.0 311L517.0 318L521.0 311L525.0 318L529.0 311L533.0 318L537.0 311L541.0 318L545.0 311L549.0 318L553.0 311L557.0 318L561.0 311L565.0 318L569.0 311L573.0 318L577.0 311L581.0 318" stroke="#2a66c0" stroke-width="0.9" fill="none"/>
<rect x="421.0" y="310.0" width="159.0" height="1.2" fill="#2560b8" opacity="1"/>
<rect x="421.0" y="318.0" width="159.0" height="1.2" fill="#1f55a8" opacity="1"/>
<rect x="424.0" y="296.0" width="8.0" height="14.0" fill="#d6b84a" opacity="0.85"/>
<rect x="400.7" y="314.0" width="21.0" height="60.0" fill="#3e3026" opacity="1"/>
<rect x="400.7" y="312.0" width="21.0" height="3.0" fill="#7a6a50" opacity="1"/>
<rect x="403.0" y="318.0" width="4.0" height="14.0" fill="#d9d3c8" opacity="0.7"/>
<rect x="408.0" y="320.0" width="4.0" height="15.0" fill="#8a4030" opacity="1"/>
<rect x="414.0" y="320.0" width="4.0" height="15.0" fill="#8a4030" opacity="1"/>
<rect x="421.0" y="319.0" width="159.0" height="56.0" fill="#2a1c12" opacity="1"/>
<rect x="440.0" y="320.0" width="60.0" height="10.0" fill="#5a4428" opacity="0.8"/>
<path d="M434 322L442 322L452 356L444 356Z" fill="#8a8c8c"/>
<path d="M446 322L470 322L470 340L452 340Z" fill="#55504a" opacity="0.8"/>
<rect x="446.0" y="354.0" width="4.0" height="26.0" fill="#e8b21a" opacity="1"/>
<rect x="455.0" y="352.0" width="3.5" height="26.0" fill="#f0c030" opacity="1"/>
<rect x="464.0" y="352.0" width="3.5" height="26.0" fill="#e0a010" opacity="1"/>
<rect x="475.0" y="330.0" width="3.0" height="46.0" fill="#b07a14" opacity="1"/>
<rect x="486.0" y="355.0" width="4.0" height="25.0" fill="#f2b820" opacity="1"/>
<rect x="496.0" y="355.0" width="3.5" height="23.0" fill="#e8a818" opacity="1"/>
<rect x="470.0" y="322.0" width="2.5" height="28.0" fill="#d89a1a" opacity="1"/>
<rect x="482.0" y="325.0" width="2.0" height="20.0" fill="#e8b030" opacity="1"/>
<rect x="492.0" y="322.0" width="3.0" height="18.0" fill="#d0901a" opacity="1"/>
<rect x="440.0" y="322.0" width="3.5" height="50.0" fill="#20140c" opacity="0.7"/>
<rect x="451.0" y="322.0" width="3.5" height="50.0" fill="#20140c" opacity="0.7"/>
<rect x="460.0" y="322.0" width="3.5" height="50.0" fill="#20140c" opacity="0.7"/>
<rect x="470.0" y="322.0" width="3.5" height="50.0" fill="#20140c" opacity="0.7"/>
<rect x="481.0" y="322.0" width="3.5" height="50.0" fill="#20140c" opacity="0.7"/>
<rect x="492.0" y="322.0" width="3.5" height="50.0" fill="#20140c" opacity="0.7"/>
<rect x="502.0" y="322.0" width="3.5" height="50.0" fill="#20140c" opacity="0.7"/>
<rect x="404.0" y="354.0" width="24.0" height="14.0" fill="#f4bd1c" opacity="1"/>
<rect x="408.0" y="356.0" width="3.0" height="10.0" fill="#5a3a10" opacity="0.7"/>
<rect x="414.0" y="356.0" width="3.0" height="10.0" fill="#5a3a10" opacity="0.7"/>
<rect x="420.0" y="356.0" width="3.0" height="10.0" fill="#5a3a10" opacity="0.7"/>
<rect x="410.0" y="340.0" width="25.0" height="2.0" fill="#f0b830" opacity="1"/>
<rect x="410.0" y="345.0" width="25.0" height="1.5" fill="#e0a020" opacity="1"/>
<path d="M411.0 340.0L413.0 346.0" stroke="#d9a428" stroke-width="0.7" fill="none" opacity="1"/>
<path d="M415.5 340.0L417.5 346.0" stroke="#d9a428" stroke-width="0.7" fill="none" opacity="1"/>
<path d="M420.0 340.0L422.0 346.0" stroke="#d9a428" stroke-width="0.7" fill="none" opacity="1"/>
<path d="M424.5 340.0L426.5 346.0" stroke="#d9a428" stroke-width="0.7" fill="none" opacity="1"/>
<path d="M429.0 340.0L431.0 346.0" stroke="#d9a428" stroke-width="0.7" fill="none" opacity="1"/>
<path d="M433.5 340.0L435.5 346.0" stroke="#d9a428" stroke-width="0.7" fill="none" opacity="1"/>
<rect x="400.7" y="368.0" width="28.0" height="8.0" fill="#3a2a14" opacity="1"/>
<rect x="508.0" y="320.0" width="5.5" height="56.0" fill="#f3bd2a" opacity="1"/>
<path d="M513 347L526 320L532 320L532 324L516 356L513 356Z" fill="#f6cc52"/>
<rect x="513.0" y="340.0" width="18.0" height="3.0" fill="#f0b42a" opacity="1"/>
<rect x="513.0" y="360.0" width="18.0" height="3.0" fill="#f0b42a" opacity="1"/>
<rect x="531.0" y="313.0" width="6.0" height="63.0" fill="#e0901c" opacity="1"/>
<rect x="520.0" y="322.0" width="12.0" height="6.0" fill="#f7d774" opacity="1"/>
<rect x="537.0" y="319.0" width="42.0" height="52.0" fill="#2b2016" opacity="1"/>
<rect x="541.0" y="322.0" width="3.0" height="46.0" fill="#6a4a1a" opacity="1"/>
<rect x="547.0" y="322.0" width="3.0" height="46.0" fill="#a8781c" opacity="1"/>
<rect x="553.0" y="322.0" width="3.0" height="46.0" fill="#5a3a14" opacity="1"/>
<rect x="558.0" y="353.0" width="4.0" height="21.0" fill="#f2b41e" opacity="1"/>
<rect x="565.5" y="353.0" width="4.0" height="21.0" fill="#f2b41e" opacity="1"/>
<rect x="573.0" y="353.0" width="4.0" height="21.0" fill="#f2b41e" opacity="1"/>
<rect x="562.0" y="319.0" width="17.0" height="17.0" fill="#3d4a22" opacity="1"/>
<circle cx="566.6" cy="327.6" r="1.6" fill="#566a2c"/>
<circle cx="568.5" cy="328.5" r="1.6" fill="#566a2c"/>
<circle cx="572.4" cy="320.9" r="1.6" fill="#566a2c"/>
<circle cx="563.2" cy="331.7" r="1.6" fill="#566a2c"/>
<circle cx="566.9" cy="323.3" r="1.6" fill="#566a2c"/>
<circle cx="577.9" cy="326.6" r="1.6" fill="#566a2c"/>
<circle cx="575.5" cy="326.7" r="1.6" fill="#566a2c"/>
<circle cx="572.6" cy="322.1" r="1.6" fill="#566a2c"/>
<circle cx="572.5" cy="332.2" r="1.6" fill="#566a2c"/>
<circle cx="570.8" cy="330.4" r="1.6" fill="#566a2c"/>
<circle cx="573.1" cy="320.9" r="1.6" fill="#566a2c"/>
<circle cx="574.4" cy="328.3" r="1.6" fill="#566a2c"/>
<circle cx="567.5" cy="320.4" r="1.6" fill="#566a2c"/>
<circle cx="576.0" cy="326.6" r="1.6" fill="#566a2c"/>
<rect x="578.0" y="303.0" width="3.5" height="66.0" fill="#3a2a16" opacity="1"/>
<rect x="582.0" y="300.0" width="3.0" height="69.0" fill="#6a4a1c" opacity="1"/>
<rect x="585.5" y="301.0" width="3.0" height="68.0" fill="#2c2014" opacity="1"/>
<rect x="589.0" y="297.0" width="3.5" height="72.0" fill="#8a6424" opacity="1"/>
<rect x="593.0" y="299.0" width="3.0" height="70.0" fill="#30241a" opacity="1"/>
<rect x="600.0" y="302.0" width="3.0" height="67.0" fill="#3a3028" opacity="1"/>
<rect x="603.5" y="299.0" width="3.5" height="70.0" fill="#7a5a24" opacity="1"/>
<rect x="607.5" y="298.0" width="3.0" height="71.0" fill="#3a2a16" opacity="1"/>
<rect x="611.0" y="300.0" width="3.0" height="69.0" fill="#96702a" opacity="1"/>
<rect x="614.3" y="303.0" width="2.7" height="66.0" fill="#33261a" opacity="1"/>
<rect x="578.0" y="335.0" width="40.0" height="4.0" fill="#8a7a68" opacity="0.7"/>
<rect x="596.0" y="320.0" width="4.0" height="49.0" fill="#46382a" opacity="0.7"/>
<rect x="588.0" y="348.0" width="3.0" height="21.0" fill="#d09a20" opacity="0.9"/>
<rect x="592.0" y="348.0" width="3.0" height="21.0" fill="#d09a20" opacity="0.9"/>
<rect x="607.0" y="348.0" width="3.0" height="21.0" fill="#d09a20" opacity="0.9"/>
<rect x="617.0" y="315.0" width="30.0" height="54.0" fill="#2a221e" opacity="1"/>
<rect x="629.0" y="305.0" width="2.2" height="12.0" fill="#4a3424" opacity="1"/>
<rect x="633.0" y="305.0" width="2.2" height="12.0" fill="#4a3424" opacity="1"/>
<rect x="637.0" y="305.0" width="2.2" height="12.0" fill="#4a3424" opacity="1"/>
<rect x="641.0" y="305.0" width="2.2" height="12.0" fill="#4a3424" opacity="1"/>
<rect x="644.5" y="305.0" width="2.2" height="12.0" fill="#4a3424" opacity="1"/>
<rect x="617.0" y="312.0" width="30.0" height="3.5" fill="#6a3c30" opacity="1"/>
<path d="M638 318L643 319L635 338L630 337Z" fill="#55b574"/>
<rect x="619.0" y="322.0" width="10.0" height="10.0" fill="#6a6a6e" opacity="0.7"/>
<rect x="632.0" y="342.0" width="15.0" height="27.0" fill="#f5b820" opacity="1"/>
<rect x="635.0" y="344.0" width="1.6" height="24.0" fill="#6a4510" opacity="0.8"/>
<rect x="640.0" y="344.0" width="1.6" height="24.0" fill="#6a4510" opacity="0.8"/>
<rect x="645.0" y="344.0" width="1.6" height="24.0" fill="#6a4510" opacity="0.8"/>
<rect x="632.0" y="350.0" width="15.0" height="1.5" fill="#8a5a10" opacity="0.7"/>
<rect x="617.0" y="338.0" width="30.0" height="3.0" fill="#9a8a78" opacity="0.6"/>
<rect x="400.7" y="369.0" width="246.0" height="15.3" fill="url(#wat)" opacity="1"/>
<rect x="400.7" y="369.0" width="140.0" height="15.3" fill="#2a1c10" opacity="0.78"/>
<rect x="540.0" y="369.0" width="107.0" height="5.0" fill="#2a2418" opacity="0.55"/>
<rect x="404.0" y="372.0" width="4.0" height="11.0" fill="#c89a20" opacity="0.75"/>
<rect x="412.0" y="372.0" width="4.0" height="11.0" fill="#a87a18" opacity="0.75"/>
<rect x="420.0" y="372.0" width="4.0" height="11.0" fill="#c89a20" opacity="0.75"/>
<rect x="446.0" y="372.0" width="4.0" height="11.0" fill="#d8a820" opacity="0.75"/>
<rect x="455.0" y="372.0" width="4.0" height="11.0" fill="#c89a20" opacity="0.75"/>
<rect x="464.0" y="372.0" width="4.0" height="11.0" fill="#b88a18" opacity="0.75"/>
<rect x="475.0" y="372.0" width="4.0" height="11.0" fill="#8a6414" opacity="0.75"/>
<rect x="486.0" y="372.0" width="4.0" height="11.0" fill="#d8a820" opacity="0.75"/>
<rect x="496.0" y="372.0" width="4.0" height="11.0" fill="#c89a20" opacity="0.75"/>
<rect x="509.0" y="372.0" width="4.0" height="11.0" fill="#e0b030" opacity="0.75"/>
<rect x="531.0" y="372.0" width="4.0" height="11.0" fill="#c88a1c" opacity="0.75"/>
<rect x="558.0" y="372.0" width="4.0" height="11.0" fill="#c89a20" opacity="0.75"/>
<rect x="565.5" y="372.0" width="4.0" height="11.0" fill="#c89a20" opacity="0.75"/>
<rect x="573.0" y="372.0" width="4.0" height="11.0" fill="#c89a20" opacity="0.75"/>
</g>
<rect x="436" y="126.3" width="34" height="135" fill="url(#fold)"/>
<rect x="436" y="261.3" width="34" height="123.0" fill="url(#fold)" opacity="0.45"/>
</svg>
</div>
</body>
</html>
